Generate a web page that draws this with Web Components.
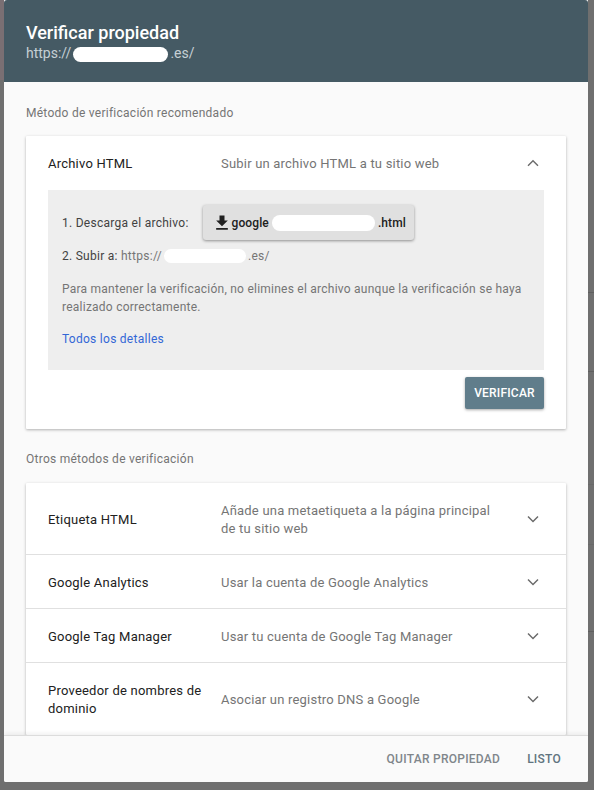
<!DOCTYPE html>
<html lang="es">
<head>
<meta charset="utf-8">
<title>Verificar propiedad</title>
<style>
  html, body { margin: 0; height: 790px; overflow: hidden; }
  body {
    font-family: Roboto, "Liberation Sans", sans-serif;
    background:
      linear-gradient(#5f5f5f, #5f5f5f) right 0 top 292px / 6px 1px no-repeat,
      linear-gradient(#5f5f5f, #5f5f5f) right 0 top 371px / 6px 1px no-repeat,
      linear-gradient(#696969, #696969) right 0 top 484px / 6px 1px no-repeat,
      linear-gradient(#696969, #696969) right 0 top 544px / 6px 1px no-repeat,
      linear-gradient(#5f5f5f, #5f5f5f) right 0 top 631px / 6px 1px no-repeat,
      linear-gradient(#7a6f73, #7a6f73) left 0 top 0 / 4px 80px no-repeat,
      #6f6f6f;
  }
</style>
</head>
<body>
<verify-dialog>
  <span slot="title">Verificar propiedad</span>
  <span slot="url">https://<redact-blob w="95" h="15" gap="2"></redact-blob>.es/</span>

  <section-label>Método de verificación recomendado</section-label>
  <method-card>
    <method-row title="Archivo HTML" open>Subir un archivo HTML a tu sitio web</method-row>
    <html-panel></html-panel>
  </method-card>

  <section-label class="second">Otros métodos de verificación</section-label>
  <method-card>
    <method-row title="Etiqueta HTML" h="71">Añade una metaetiqueta a la página principal de tu sitio web</method-row>
    <method-row title="Google Analytics" h="54" line>Usar la cuenta de Google Analytics</method-row>
    <method-row title="Google Tag Manager" h="54" line>Usar tu cuenta de Google Tag Manager</method-row>
    <method-row title="Proveedor de nombres de dominio" h="73" line>Asociar un registro DNS a Google</method-row>
  </method-card>
</verify-dialog>

<script>
const chevron = (up) => `<svg width="22" height="22" viewBox="0 0 24 24" fill="#6b6b6b"><path d="${up
  ? "M12 8.4l-6 6 1.1 1.1L12 10.6l4.9 4.9 1.1-1.1z"
  : "M16.9 8.6L12 13.5 7.1 8.6 6 9.7l6 6 6-6z"}"/></svg>`;

// white smear that hides the domain in the screenshot
class RedactBlob extends HTMLElement {
  connectedCallback() {
    const root = this.attachShadow({ mode: "open" });
    const w = this.getAttribute("w"), h = this.getAttribute("h"), gap = this.getAttribute("gap") || 0;
    root.innerHTML = `<style>
      :host { display: inline-block; width: ${w}px; height: ${h}px; margin: 0 ${gap}px;
        background: #fff; border-radius: ${h / 2}px; vertical-align: middle; }
    </style>`;
  }
}
customElements.define("redact-blob", RedactBlob);

class VerifyDialog extends HTMLElement {
  constructor() {
    super();
    this.attachShadow({ mode: "open" }).innerHTML = `<style>
      :host { display: flex; flex-direction: column; width: 584px; height: 782px; margin-left: 4px;
        background: #fafafa; border-radius: 0 0 2px 2px; overflow: hidden; }
      header { flex: none; height: 82px; box-sizing: border-box; padding: 22px 22px 0; background: #455a64; color: #fff; border-radius: 3px 3px 0 0; }
      .title { font-size: 18px; font-weight: 500; line-height: 22px; }
      .url { font-size: 14px; line-height: 20px; color: #c5d0d5; margin-top: -1px; }
      main { flex: 1; min-height: 0; overflow: hidden; padding: 0 22px; }
      footer { flex: none; height: 47px; box-sizing: border-box; display: flex; justify-content: flex-end; align-items: center; gap: 27px;
        padding: 0 27px 1px 0; border-top: 1px solid #dcdcdc; font-size: 12px; font-weight: 500; letter-spacing: .26px; background: #fafafa;
        box-shadow: 0 -2px 4px rgba(0,0,0,.06); position: relative; }
      .remove { color: #80868b; }
      .done { color: #5f7480; }
    </style>
    <header>
      <div class="title"><slot name="title"></slot></div>
      <div class="url"><slot name="url"></slot></div>
    </header>
    <main><slot></slot></main>
    <footer><span class="remove">QUITAR PROPIEDAD</span><span class="done">LISTO</span></footer>`;
  }
}
customElements.define("verify-dialog", VerifyDialog);

class SectionLabel extends HTMLElement {
  constructor() {
    super();
    this.attachShadow({ mode: "open" }).innerHTML = `<style>
      :host { display: block; font-size: 12px; line-height: 18px; letter-spacing: .26px; color: #757575; padding: 22px 0 14px; }
      :host(.second) { padding: 21px 0 15px; }
    </style><slot></slot>`;
  }
}
customElements.define("section-label", SectionLabel);

class MethodCard extends HTMLElement {
  constructor() {
    super();
    this.attachShadow({ mode: "open" }).innerHTML = `<style>
      :host { display: block; background: #fff; box-shadow: 0 1px 3px rgba(0,0,0,.3); border-radius: 1px; }
    </style><slot></slot>`;
  }
}
customElements.define("method-card", MethodCard);

class MethodRow extends HTMLElement {
  connectedCallback() {
    const root = this.attachShadow({ mode: "open" });
    const open = this.hasAttribute("open");
    const h = this.getAttribute("h") || 54;
    root.innerHTML = `<style>
      :host { display: flex; align-items: center; box-sizing: border-box; height: ${h}px; padding: 0 22px 0 22px; }
      :host([line]) { border-top: 1px solid #e0e0e0; }
      .name { flex: none; width: 173px; font-size: 13px; line-height: 18px; color: #212121; letter-spacing: .22px; position: relative; top: 1px; }
      .desc { flex: 1; font-size: 13px; line-height: 18px; color: #757575; letter-spacing: .2px; padding-right: 20px; position: relative; top: 1px; }
      svg { flex: none; display: block; width: 22px; height: 22px; }
    </style>
    <div class="name">${this.getAttribute("title")}</div>
    <div class="desc"><slot></slot></div>
    ${chevron(open)}`;
  }
}
customElements.define("method-row", MethodRow);

class HtmlPanel extends HTMLElement {
  constructor() {
    super();
    this.attachShadow({ mode: "open" }).innerHTML = `<style>
      :host { display: block; padding: 0 22px 20px; font-size: 12px; line-height: 18px; color: #424242; letter-spacing: .27px; }
      .box { background: #eeeeee; height: 180px; box-sizing: border-box; padding: 15px 14px 0; }
      .step { display: flex; align-items: center; }
      .first { gap: 14px; height: 35px; }
      .btn { display: flex; align-items: center; box-sizing: border-box; width: 211px; height: 35px; padding-left: 9px;
        background: #e0e0e0; border-radius: 3px; box-shadow: 0 1px 3px rgba(0,0,0,.4); font-weight: 500; color: #212121; letter-spacing: .1px; }
      .btn svg { width: 20px; height: 20px; flex: none; }
      .btn redact-blob { margin: 0 3px; }
      .up { margin-top: 7px; }
      .up span { color: #757575; }
      p { margin: 15px 0 0; color: #757575; line-height: 18px; letter-spacing: .24px; }
      a { display: block; margin-top: 14px; color: #3367d6; text-decoration: none; }
      .actions { display: flex; justify-content: flex-end; padding-top: 7px; }
      .verify { box-sizing: border-box; width: 79px; height: 32px; display: flex; align-items: center; justify-content: center;
        background: #607d8b; color: #fff; border-radius: 2px; font-weight: 500; box-shadow: 0 1px 3px rgba(0,0,0,.35); letter-spacing: .2px; }
    </style>
    <div class="box">
      <div class="step first">1. Descarga el archivo:
        <div class="btn">
          <svg viewBox="0 0 24 24" fill="#212121"><path d="M19 9h-4V3H9v6H5l7 7 7-7zM5 18v2h14v-2H5z"/></svg>
          <span>google</span><redact-blob w="103" h="16"></redact-blob><span>.html</span>
        </div>
      </div>
      <div class="step up">2. Subir a:&nbsp;<span>https://</span><redact-blob w="82" h="14" gap="2"></redact-blob><span>.es/</span></div>
      <p>Para mantener la verificación, no elimines el archivo aunque la verificación se haya realizado correctamente.</p>
      <a href="#">Todos los detalles</a>
    </div>
    <div class="actions"><div class="verify">VERIFICAR</div></div>`;
  }
}
customElements.define("html-panel", HtmlPanel);
</script>
</body>
</html>
